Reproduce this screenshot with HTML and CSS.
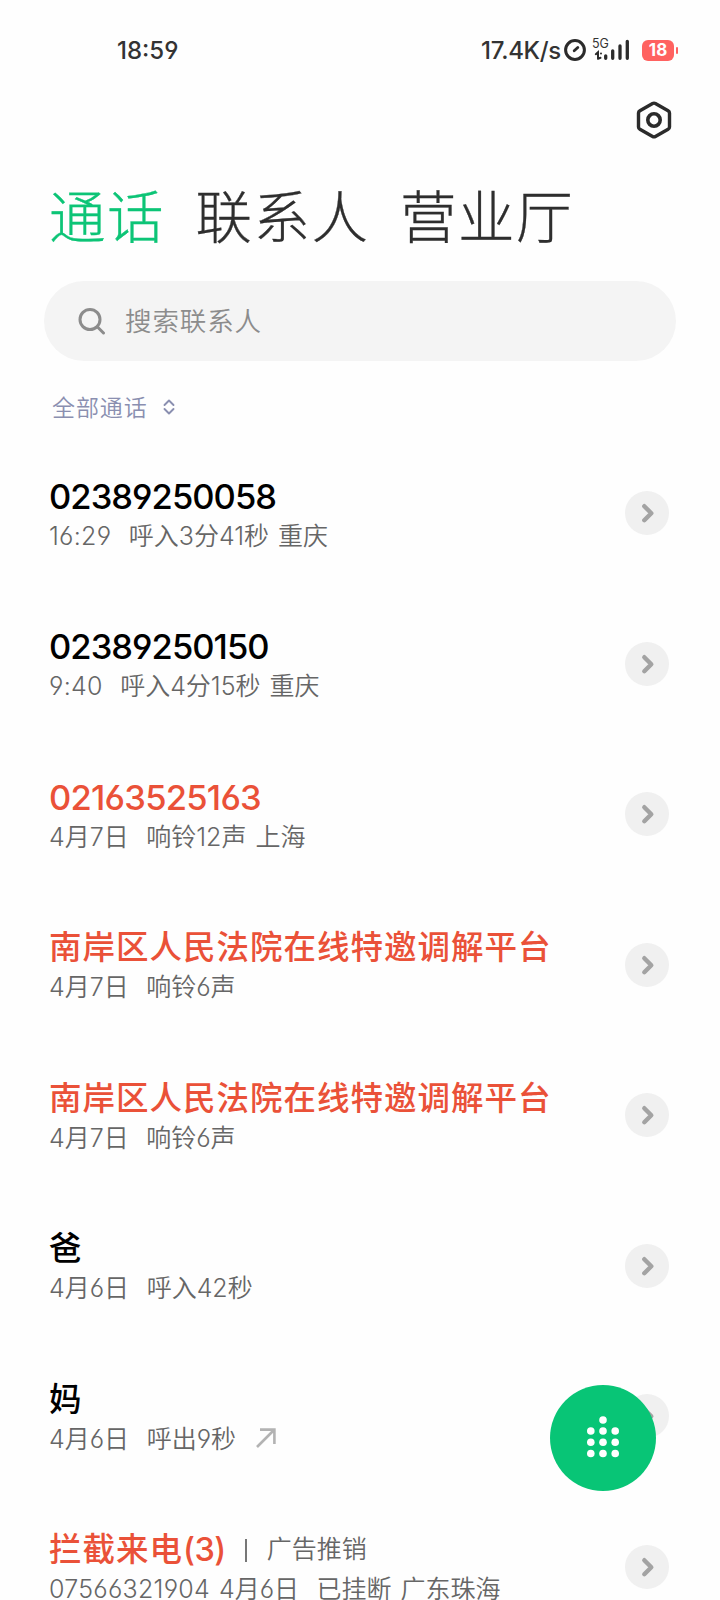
FILE: index.html
```
<!DOCTYPE html>
<html lang="zh-CN">
<head>
  <meta charset="UTF-8" />
  <title>通话</title>
  <link rel="stylesheet" href="styles.css">
</head>
<body>
  <svg width="0" height="0" class="defs">
    <symbol id="chevron" viewBox="0 0 44 44">
      <path d="M19.300 15.200l7 7-7 7" fill="none" stroke="#a3a3a3" stroke-width="4.400" stroke-linecap="round" stroke-linejoin="round" />
    </symbol>
  </svg>

  <div class="status">
    <span class="clock">18:59</span>
    <span class="speed">17.4K/s</span>
    <svg class="gauge" width="22" height="22" viewBox="0 0 22 22" fill="none" stroke="#2b2b2b">
      <circle cx="11" cy="11" r="9.400" stroke-width="3" />
      <path d="M10.200 11.800l3.600-3.400" stroke-width="2.800" stroke-linecap="round" />
    </svg>
    <div class="network">
      <span>5G</span>
      <svg width="38" height="22" viewBox="0 0 38 22" stroke="#2b2b2b" fill="none" stroke-linecap="round">
        <path d="M2.800 15.200l2.200-1.900v6M8 14.500v.1M7.500 18.800l-2.500 1" stroke-width="2" />
        <path d="M12.700 16.800v2.500M19.700 11.800v7.500M27 7v12.300M34.300 2.300v17" stroke-width="3.300" />
      </svg>
    </div>
    <div class="battery">18</div>
  </div>

  <div class="toolbar">
    <svg width="36" height="38" viewBox="0 0 36 38" fill="none" stroke="#2b2b2b" stroke-width="3.400" stroke-linejoin="round">
      <path d="M16.600 2.500q1.400-.8 2.800 0l12.700 7.200q1.400.8 1.400 2.400v13.800q0 1.600-1.400 2.400l-12.700 7.200q-1.400.8-2.800 0l-12.700-7.200q-1.400-.8-1.400-2.400V12.100q0-1.600 1.400-2.400z" />
      <circle cx="18" cy="19" r="6.200" stroke-width="3.600" />
    </svg>
  </div>

  <nav class="tabs">
    <a class="active">通话</a>
    <a>联系人</a>
    <a>营业厅</a>
  </nav>

  <div class="search">
    <svg width="28" height="28" viewBox="0 0 28 28" fill="none" stroke="#8c8c8c" stroke-width="3" stroke-linecap="round">
      <circle cx="12" cy="12.500" r="10" />
      <path d="M19.300 19.800l6.200 6.200" />
    </svg>
    <span>搜索联系人</span>
  </div>

  <div class="filter">
    <span>全部通话</span>
    <svg width="12" height="16" viewBox="0 0 12 16" fill="none" stroke="#8a8fb0" stroke-width="1.900" stroke-linecap="round" stroke-linejoin="round">
      <path d="M1.500 6L6 1.500 10.500 6M1.500 10L6 14.500 10.500 10" />
    </svg>
  </div>

  <main class="calls">
    <div class="call">
      <div class="info">
        <div class="name number">02389250058</div>
        <div class="meta"><span class="time">16:29</span><span class="detail">呼入3分41秒</span><span class="place">重庆</span></div>
      </div>
      <svg class="more"><use href="#chevron" /></svg>
    </div>
    <div class="call">
      <div class="info">
        <div class="name number">02389250150</div>
        <div class="meta"><span class="time">9:40</span><span class="detail">呼入4分15秒</span><span class="place">重庆</span></div>
      </div>
      <svg class="more"><use href="#chevron" /></svg>
    </div>
    <div class="call">
      <div class="info">
        <div class="name number missed">02163525163</div>
        <div class="meta"><span>4月7日</span><span class="detail">响铃12声</span><span class="place">上海</span></div>
      </div>
      <svg class="more"><use href="#chevron" /></svg>
    </div>
    <div class="call">
      <div class="info">
        <div class="name missed">南岸区人民法院在线特邀调解平台</div>
        <div class="meta"><span>4月7日</span><span class="detail">响铃6声</span></div>
      </div>
      <svg class="more"><use href="#chevron" /></svg>
    </div>
    <div class="call">
      <div class="info">
        <div class="name missed">南岸区人民法院在线特邀调解平台</div>
        <div class="meta"><span>4月7日</span><span class="detail">响铃6声</span></div>
      </div>
      <svg class="more"><use href="#chevron" /></svg>
    </div>
    <div class="call">
      <div class="info">
        <div class="name">爸</div>
        <div class="meta"><span>4月6日</span><span class="detail">呼入42秒</span></div>
      </div>
      <svg class="more"><use href="#chevron" /></svg>
    </div>
    <div class="call">
      <div class="info">
        <div class="name">妈</div>
        <div class="meta">
          <span>4月6日</span><span class="detail">呼出9秒</span>
          <svg class="outgoing" width="20" height="20" viewBox="0 0 20 20" fill="none" stroke="#b3b3b3" stroke-width="2.600">
            <path d="M1 19L18 2M4 1.600h14.400V16" />
          </svg>
        </div>
      </div>
      <svg class="more"><use href="#chevron" /></svg>
    </div>
    <div class="call">
      <div class="info">
        <div class="name missed">拦截来电<span class="count">(3)</span><i class="bar"></i><span class="tag">广告推销</span></div>
        <div class="meta"><span class="time">07566321904</span><span class="place">4月6日</span><span class="detail">已挂断</span><span class="place">广东珠海</span></div>
      </div>
      <svg class="more"><use href="#chevron" /></svg>
    </div>
  </main>

  <button class="dial">
    <svg width="34" height="44" viewBox="0 0 34 44" fill="#fff">
      <circle cx="17" cy="4" r="3.800" />
      <circle cx="4.800" cy="15" r="3.800" /><circle cx="17" cy="15" r="3.800" /><circle cx="29.200" cy="15" r="3.800" />
      <circle cx="4.800" cy="26.300" r="3.800" /><circle cx="17" cy="26.300" r="3.800" /><circle cx="29.200" cy="26.300" r="3.800" />
      <circle cx="4.800" cy="37.500" r="3.800" /><circle cx="17" cy="37.500" r="3.800" /><circle cx="29.200" cy="37.500" r="3.800" />
    </svg>
  </button>
</body>
</html>
```
FILE: styles.css
```
* {
  box-sizing: border-box;
}

body {
  margin: 0;
  height: 1600px;
  overflow: hidden;
  background: #fefefe;
  color: #000;
  font-family: Inter, "Noto Sans CJK SC", sans-serif;
  font-feature-settings: "cv03", "cv04";
}

svg {
  display: block;
  flex: none;
}

.defs {
  position: absolute;
}

.status {
  height: 100px;
  padding: 0 46px 0 117px;
  display: flex;
  align-items: center;
  color: #333;
  font-size: 24px;
  font-weight: 500;
}

.clock {
  margin-right: auto;
}

.speed {
  letter-spacing: -0.300px;
}

.gauge {
  margin-left: 3px;
}

.network {
  position: relative;
  margin-left: 7px;
}

.network span {
  position: absolute;
  top: -2px;
  left: -1px;
  font-size: 12.500px;
  font-weight: 400;
  line-height: 14px;
}

.battery {
  position: relative;
  width: 32px;
  height: 21px;
  margin-left: 11px;
  border-radius: 6px;
  background: #ff6260;
  color: #fff;
  font-size: 17px;
  font-weight: 700;
  line-height: 21px;
  text-align: center;
}

.battery::after {
  content: "";
  position: absolute;
  top: 7px;
  right: -4px;
  width: 2px;
  height: 7px;
  border-radius: 1px;
  background: #ff6260;
}

.toolbar {
  height: 70px;
  padding: 1px 48px 0 0;
  display: flex;
  justify-content: flex-end;
}

.tabs {
  height: 111px;
  padding-left: 49px;
  display: flex;
  gap: 30.500px;
  color: #2e2e2e;
  font-size: 56.500px;
  font-weight: 300;
  -webkit-text-stroke: 0.300px;
  line-height: 96px;
  letter-spacing: 1.500px;
}

.tabs .active {
  color: #0cc476;
}

.search {
  height: 80px;
  margin: 0 44px;
  padding-left: 34px;
  display: flex;
  align-items: center;
  gap: 19px;
  border-radius: 40px;
  background: #f4f4f4;
  color: #8c8c8c;
  font-size: 26.500px;
  font-weight: 350;
  letter-spacing: 0.900px;
}

.search span {
  padding-bottom: 3px;
}

.filter {
  height: 92px;
  padding-left: 52px;
  display: flex;
  align-items: center;
  gap: 15px;
  color: #8a8fb0;
  font-size: 23px;
  font-weight: 350;
  letter-spacing: 0.900px;
}

.filter span {
  padding-bottom: 2px;
}

.call {
  height: 150.500px;
  padding: 22.500px 50px 0 49px;
  display: flex;
  justify-content: space-between;
}

.name {
  height: 43px;
  display: flex;
  align-items: baseline;
  font-size: 32.500px;
  font-weight: 500;
  line-height: 41px;
  letter-spacing: 1px;
  white-space: nowrap;
}

.number {
  font-size: 34.500px;
  line-height: 42px;
  letter-spacing: -0.950px;
}

.missed {
  color: #ea5138;
}

.number.missed {
  letter-spacing: -0.750px;
}

.count {
  letter-spacing: -0.500px;
}

.meta {
  height: 35px;
  display: flex;
  align-items: baseline;
  color: #666;
  font-size: 25px;
  font-weight: 350;
  line-height: 35px;
  white-space: nowrap;
}

.time {
  letter-spacing: 0.250px;
}

.detail {
  margin-left: 17.500px;
}

.place {
  margin-left: 9px;
}

.outgoing {
  margin-left: 20px;
}

.bar {
  align-self: center;
  width: 2px;
  height: 23px;
  margin: 0 20px 0 19px;
  background: #777;
}

.tag {
  align-self: flex-start;
  color: #666;
  font-size: 25px;
  font-weight: 350;
  letter-spacing: 0;
}

.more {
  width: 44px;
  height: 44px;
  margin: 15.500px 0.700px 0 0;
  border-radius: 50%;
  background: #f0f0f0;
}

.dial {
  position: fixed;
  right: 64px;
  bottom: 109px;
  width: 106px;
  height: 106px;
  padding: 0;
  display: flex;
  align-items: center;
  justify-content: center;
  border: none;
  border-radius: 50%;
  background: #08c576;
}
```
